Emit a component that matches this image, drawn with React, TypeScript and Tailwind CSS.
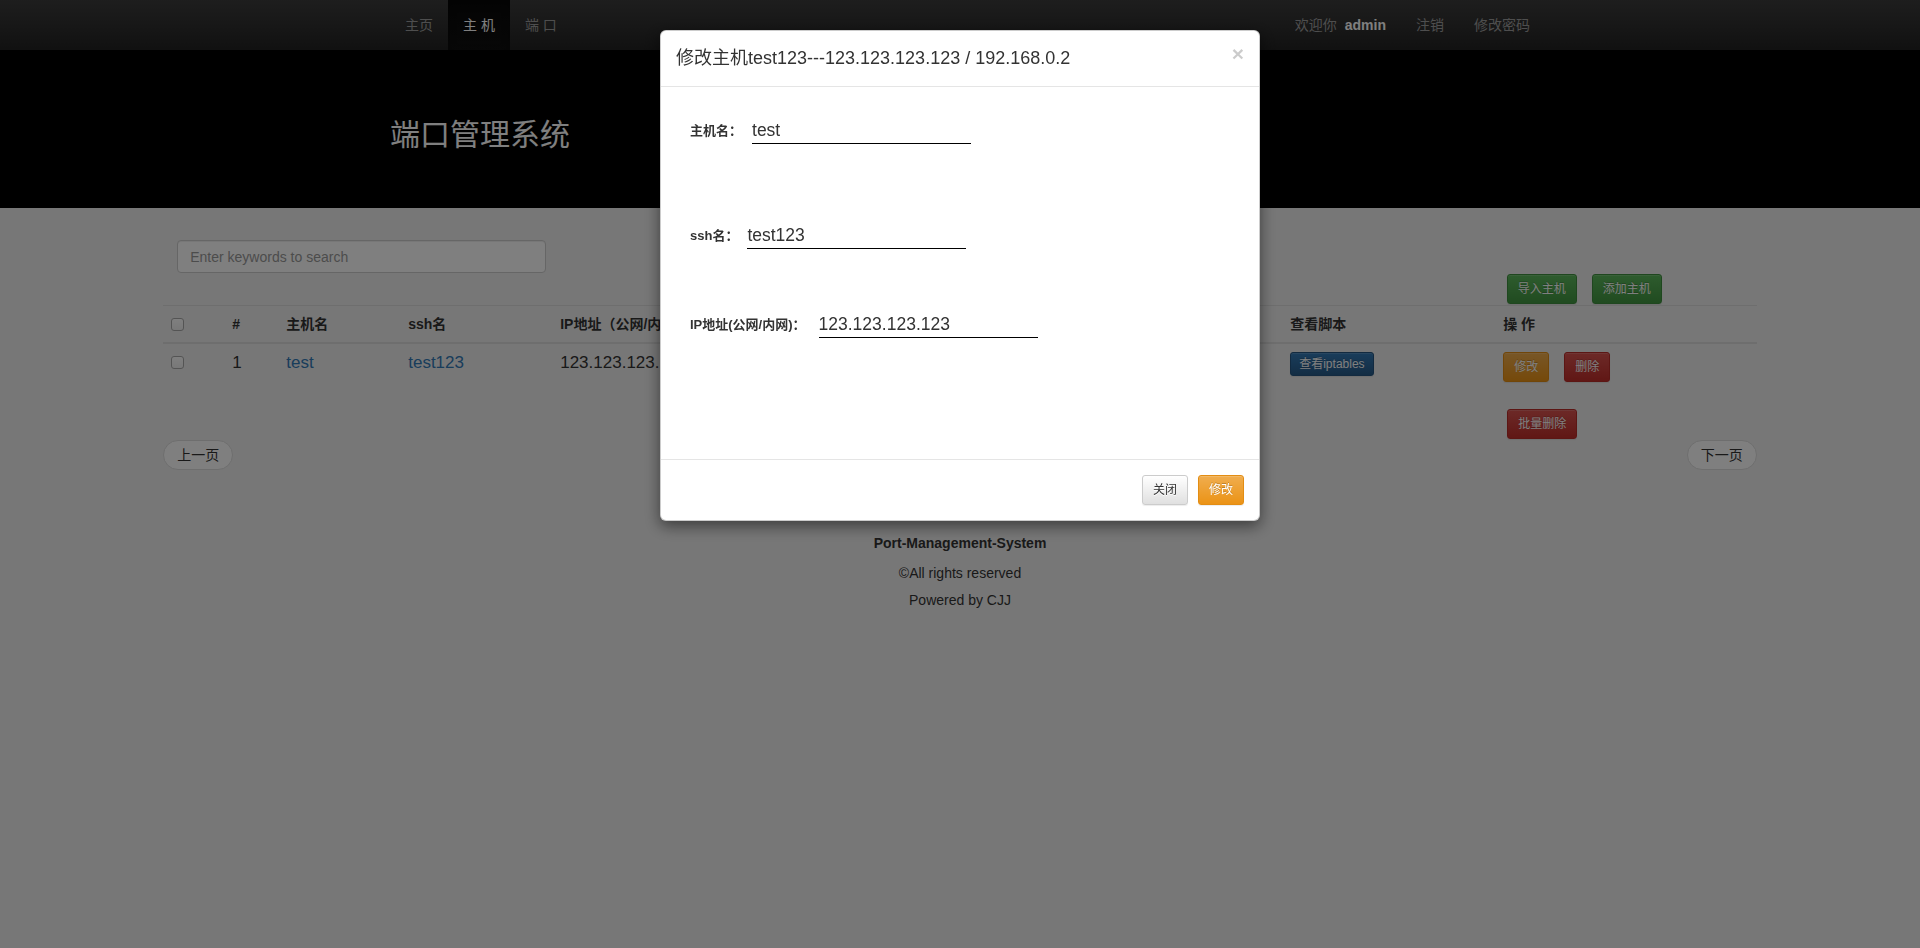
import React from "react";

const variants: Record<string, string> = {
  success:
    "bg-[linear-gradient(to_bottom,#5cb85c_0%,#419641_100%)] border-[#3e8f3e] text-white [text-shadow:0_-1px_0_rgba(0,0,0,0.2)]",
  warning:
    "bg-[linear-gradient(to_bottom,#f0ad4e_0%,#eb9316_100%)] border-[#e38d13] text-white [text-shadow:0_-1px_0_rgba(0,0,0,0.2)]",
  danger:
    "bg-[linear-gradient(to_bottom,#d9534f_0%,#c12e2a_100%)] border-[#b92c28] text-white [text-shadow:0_-1px_0_rgba(0,0,0,0.2)]",
  primary:
    "bg-[linear-gradient(to_bottom,#337ab7_0%,#265a88_100%)] border-[#245580] text-white [text-shadow:0_-1px_0_rgba(0,0,0,0.2)]",
  default:
    "bg-[linear-gradient(to_bottom,#ffffff_0%,#e0e0e0_100%)] border-[#cccccc] text-[#333] [text-shadow:0_1px_0_#fff]",
};

const sizes: Record<string, string> = {
  sm: "h-[30px] px-[10px] text-[12px] leading-[18px] rounded-[3px]",
  xs: "h-[24px] px-[8px] text-[12px] leading-[18px] rounded-[3px]",
};

function Btn({
  children,
  variant,
  size = "sm",
}: {
  children: React.ReactNode;
  variant: string;
  size?: string;
}) {
  return (
    <button
      type="button"
      className={`inline-flex items-center justify-center whitespace-nowrap border shadow-[inset_0_1px_0_rgba(255,255,255,0.15),0_1px_1px_rgba(0,0,0,0.075)] ${variants[variant]} ${sizes[size]}`}
    >
      {children}
    </button>
  );
}

function Check() {
  return (
    <span className="mt-[4px] block w-[13px] h-[13px] rounded-[3px] border border-[#a9a9a9] bg-[linear-gradient(to_bottom,#ffffff_0%,#f0f0f0_100%)]" />
  );
}

export default function App() {
  return (
    <div className="relative min-h-[948px] bg-[#eeeeee] font-['Liberation_Sans','Noto_Sans_CJK_SC',sans-serif] text-[#333]">
      {/* navbar */}
      <nav className="h-[50px] bg-[linear-gradient(to_bottom,#3c3c3c_0%,#222222_100%)]">
        <div className="w-[1170px] mx-auto px-[15px] h-full flex justify-between">
          <ul className="flex text-[14px] leading-[20px]">
            <li className="px-[15px] py-[15px] text-[#9d9d9d]">主页</li>
            <li className="px-[15px] py-[15px] text-white bg-[linear-gradient(to_bottom,#080808_0%,#0f0f0f_100%)] shadow-[inset_0_3px_9px_rgba(0,0,0,0.25)]">
              主 机
            </li>
            <li className="px-[15px] py-[15px] text-[#9d9d9d]">端 口</li>
          </ul>
          <ul className="flex -mr-[15px] text-[14px] leading-[20px]">
            <li className="px-[15px] py-[15px] text-[#9d9d9d]">
              欢迎你<span className="ml-[8px] font-bold text-white">admin</span>
            </li>
            <li className="px-[15px] py-[15px] text-[#9d9d9d]">注销</li>
            <li className="px-[15px] py-[15px] text-[#9d9d9d]">修改密码</li>
          </ul>
        </div>
      </nav>

      {/* header */}
      <header className="h-[158px] bg-black">
        <div className="w-[1170px] mx-auto px-[15px] pt-[67px]">
          <h1 className="text-[30px] leading-[36px] text-white font-normal">端口管理系统</h1>
        </div>
      </header>

      {/* content */}
      <main className="w-[83%] mx-auto">
        <div className="pt-[32px] pl-[14px]">
          <input
            className="w-[369px] h-[33px] rounded-[4px] border border-[#cccccc] bg-white px-[12px] text-[14px] text-[#555] placeholder:text-[#999] outline-none shadow-[inset_0_1px_1px_rgba(0,0,0,0.075)]"
            placeholder="Enter keywords to search"
          />
        </div>
        <div className="mt-[1px] flex justify-end gap-[15px] pr-[95px]">
          <Btn variant="success">导入主机</Btn>
          <Btn variant="success">添加主机</Btn>
        </div>

        <table className="mt-[1px] w-full table-fixed border-t border-[#dddddd]">
          <colgroup>
            <col className="w-[61px]" />
            <col className="w-[54px]" />
            <col className="w-[122px]" />
            <col className="w-[152px]" />
            <col className="w-[348px]" />
            <col className="w-[382px]" />
            <col className="w-[213px]" />
            <col />
          </colgroup>
          <thead>
            <tr className="text-left text-[14px] leading-[20px] font-bold">
              <th className="p-[8px] border-b-2 border-[#dddddd] align-top">
                <Check />
              </th>
              <th className="p-[8px] border-b-2 border-[#dddddd]">#</th>
              <th className="p-[8px] border-b-2 border-[#dddddd]">主机名</th>
              <th className="p-[8px] border-b-2 border-[#dddddd]">ssh名</th>
              <th className="p-[8px] border-b-2 border-[#dddddd] whitespace-nowrap">IP地址（公网/内网）</th>
              <th className="p-[8px] border-b-2 border-[#dddddd]">端口</th>
              <th className="p-[8px] border-b-2 border-[#dddddd]">查看脚本</th>
              <th className="p-[8px] border-b-2 border-[#dddddd]">操 作</th>
            </tr>
          </thead>
          <tbody>
            <tr className="text-left text-[17px] leading-[22px] align-top">
              <td className="p-[8px]">
                <Check />
              </td>
              <td className="p-[8px]">1</td>
              <td className="p-[8px] text-[#337ab7]">test</td>
              <td className="p-[8px] text-[#337ab7]">test123</td>
              <td className="p-[8px] whitespace-nowrap">123.123.123.123 / 192.168.0.2</td>
              <td className="p-[8px]">22</td>
              <td className="p-[8px]">
                <Btn variant="primary" size="xs">
                  查看iptables
                </Btn>
              </td>
              <td className="p-[8px]">
                <div className="flex gap-[15px]">
                  <Btn variant="warning">修改</Btn>
                  <Btn variant="danger">删除</Btn>
                </div>
              </td>
            </tr>
          </tbody>
        </table>

        <div className="mt-[19px] pl-[1344px]">
          <Btn variant="danger">批量删除</Btn>
        </div>

        <div className="mt-[1px] flex justify-between">
          <span className="inline-flex h-[30px] w-[70px] items-center justify-center rounded-[15px] border border-[#dddddd] bg-white text-[14px] text-[#333]">
            上一页
          </span>
          <span className="inline-flex h-[30px] w-[70px] items-center justify-center rounded-[15px] border border-[#dddddd] bg-white text-[14px] text-[#333]">
            下一页
          </span>
        </div>

        <footer className="mt-[63px] text-center text-[14px] leading-[20px] text-[#333]">
          <p className="font-bold">Port-Management-System</p>
          <p className="mt-[10px]">©All rights reserved</p>
          <p className="mt-[7px]">Powered by CJJ</p>
        </footer>
      </main>

      {/* backdrop */}
      <div className="fixed inset-0 z-40 bg-black/50" />

      {/* modal */}
      <div className="fixed left-1/2 top-[30px] z-50 w-[600px] -translate-x-1/2 rounded-[6px] border border-[rgba(0,0,0,0.2)] bg-white shadow-[0_5px_15px_rgba(0,0,0,0.5)]">
        <div className="flex items-start justify-between border-b border-[#e5e5e5] px-[15px] py-[15px]">
          <h4 className="text-[18px] leading-[25px] text-[#333]">
            修改主机test123---123.123.123.123 / 192.168.0.2
          </h4>
          <span className="mt-[-5px] text-[21px] font-bold leading-[25px] text-black opacity-20">×</span>
        </div>
        <div className="h-[372px] pl-[29px] pt-[31px]">
          <div className="flex h-[26px] items-center">
            <label className="text-[13px] font-bold leading-[20px] text-[#333]">主机名：</label>
            <input
              readOnly
              value="test"
              className="ml-[10px] h-[26px] w-[219px] border-b border-black bg-transparent p-0 text-[17.5px] text-[#333] outline-none"
            />
          </div>
          <div className="mt-[79px] flex h-[26px] items-center">
            <label className="text-[13px] font-bold leading-[20px] text-[#333]">ssh名：</label>
            <input
              readOnly
              value="test123"
              className="ml-[9px] h-[26px] w-[219px] border-b border-black bg-transparent p-0 text-[17.5px] text-[#333] outline-none"
            />
          </div>
          <div className="mt-[63px] flex h-[26px] items-center">
            <label className="text-[13px] font-bold leading-[20px] text-[#333]">IP地址(公网/内网)：</label>
            <input
              readOnly
              value="123.123.123.123"
              className="ml-[13px] h-[26px] w-[219px] border-b border-black bg-transparent p-0 text-[17.5px] text-[#333] outline-none"
            />
          </div>
        </div>
        <div className="flex justify-end gap-[10px] border-t border-[#e5e5e5] p-[15px]">
          <Btn variant="default">关闭</Btn>
          <Btn variant="warning">修改</Btn>
        </div>
      </div>
    </div>
  );
}
